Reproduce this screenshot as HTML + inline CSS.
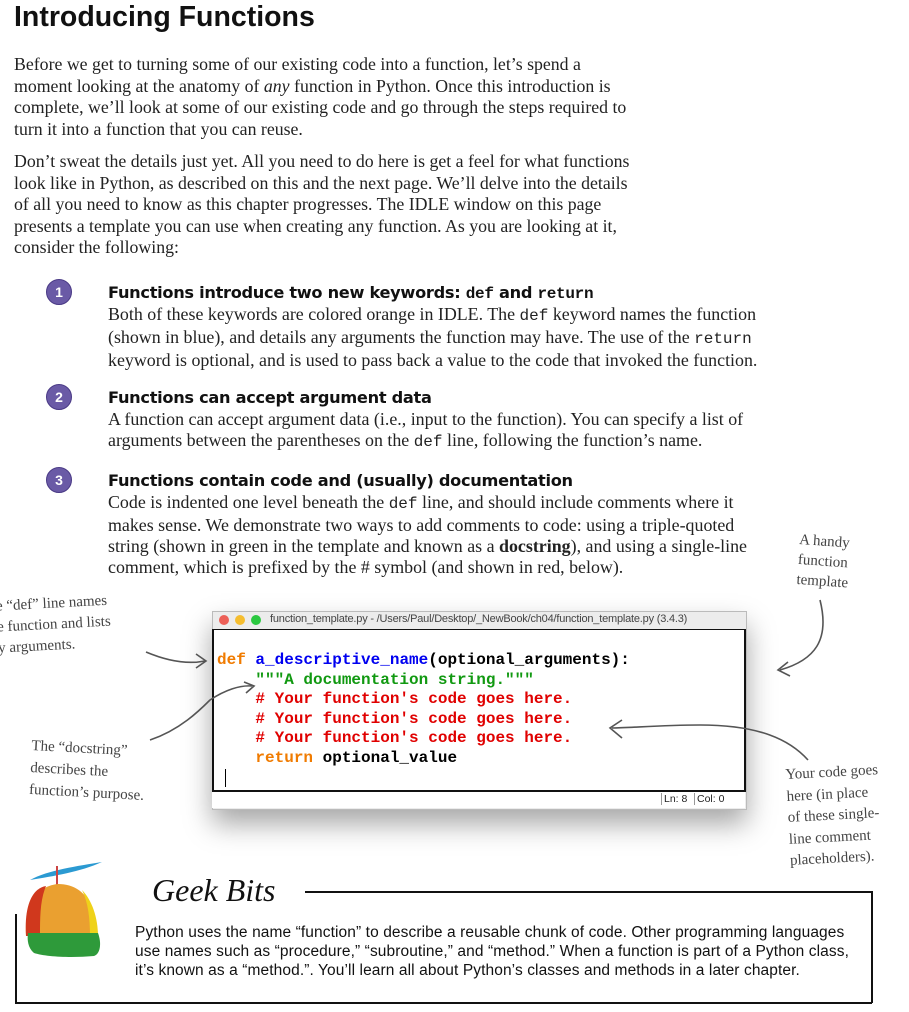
<!DOCTYPE html>
<html><head><meta charset="utf-8"><style>
body{margin:0;width:909px;height:1012px;background:#fff;position:relative;overflow:hidden;font-family:"Liberation Serif",serif;color:#222}
.a{position:absolute}
h1{position:absolute;left:14px;top:1px;margin:0;font:bold 28.5px "Liberation Sans",sans-serif;color:#111}
.p{position:absolute;left:14px;font-size:17.8px;line-height:21.5px;white-space:nowrap}
.tt{font-family:"Liberation Mono",monospace;font-size:16px}
.num{position:absolute;left:46px;width:24px;height:24px;border-radius:50%;background:#6a5aa6;border:1px solid #4a3a86;color:#fff;font:bold 14px "Liberation Sans",sans-serif;text-align:center;line-height:24px}
.hd{position:absolute;left:108px;font:bold 16.2px "DejaVu Sans",sans-serif;color:#111;letter-spacing:-0.3px}
.bd{position:absolute;left:108px;font-size:17.9px;line-height:21px;white-space:nowrap}
.hand{position:absolute;font:15px "Liberation Serif",serif;color:#444;line-height:21px;transform:rotate(-3deg);transform-origin:left top}
.code{position:absolute;left:217px;top:651px;font:bold 16px/19.6px "Liberation Mono",monospace;white-space:pre;color:#000}
.gb{position:absolute;left:135px;top:923px;font:15.5px/19px "Liberation Sans",sans-serif;color:#111;letter-spacing:0.1px}
</style></head><body>
<h1>Introducing Functions</h1>
<div class="p" style="top:54px">Before we get to turning some of our existing code into a function, let’s spend a<br>moment looking at the anatomy of <i>any</i> function in Python. Once this introduction is<br>complete, we’ll look at some of our existing code and go through the steps required to<br>turn it into a function that you can reuse.</div>
<div class="p" style="top:151px">Don’t sweat the details just yet. All you need to do here is get a feel for what functions<br>look like in Python, as described on this and the next page. We’ll delve into the details<br>of all you need to know as this chapter progresses. The IDLE window on this page<br>presents a template you can use when creating any function. As you are looking at it,<br>consider the following:</div>

<div class="num" style="top:279px">1</div>
<div class="hd" style="top:283px">Functions introduce two new keywords: <span class="tt" style="font-weight:bold">def</span> and <span class="tt" style="font-weight:bold">return</span></div>
<div class="bd" style="top:304px">Both of these keywords are colored orange in IDLE. The <span class="tt">def</span> keyword names the function<br>(shown in blue), and details any arguments the function may have. The use of the <span class="tt">return</span><br>keyword is optional, and is used to pass back a value to the code that invoked the function.</div>

<div class="num" style="top:384px">2</div>
<div class="hd" style="top:388px">Functions can accept argument data</div>
<div class="bd" style="top:409px">A function can accept argument data (i.e., input to the function). You can specify a list of<br>arguments between the parentheses on the <span class="tt">def</span> line, following the function’s name.</div>

<div class="num" style="top:467px">3</div>
<div class="hd" style="top:471px">Functions contain code and (usually) documentation</div>
<div class="bd" style="top:492px">Code is indented one level beneath the <span class="tt">def</span> line, and should include comments where it<br>makes sense. We demonstrate two ways to add comments to code: using a triple-quoted<br>string (shown in green in the template and known as a <b>docstring</b>), and using a single-line<br>comment, which is prefixed by the # symbol (and shown in red, below).</div>

<div class="hand" style="left:800px;top:530px;line-height:20px;transform:rotate(4deg)">A handy<br>function<br>template</div>
<div class="hand" style="left:-12px;top:597px;line-height:21px">he “def” line names<br>he function and lists<br>ny arguments.</div>
<div class="hand" style="left:32px;top:735px;line-height:22px;transform:rotate(3deg)">The “docstring”<br>describes the<br>function’s purpose.</div>
<div class="hand" style="left:785px;top:765px;line-height:21.5px">Your code goes<br>here (in place<br>of these single-<br>line comment<br>placeholders).</div>

<!-- window -->
<div class="a" style="left:212px;top:611px;width:533px;height:197px;background:#ececec;border:1px solid #bbb;box-shadow:0 14px 26px rgba(0,0,0,.35)"></div>
<div class="a" style="left:219px;top:615px;width:10px;height:10px;border-radius:50%;background:#ec5f57"></div>
<div class="a" style="left:235px;top:615px;width:10px;height:10px;border-radius:50%;background:#f5bd2f"></div>
<div class="a" style="left:251px;top:615px;width:10px;height:10px;border-radius:50%;background:#2bc840"></div>
<div class="a" style="left:270px;top:613px;font:11px 'Liberation Sans',sans-serif;color:#444;letter-spacing:-0.2px">function_template.py - /Users/Paul/Desktop/_NewBook/ch04/function_template.py (3.4.3)</div>
<div class="a" style="left:212px;top:629px;width:530px;height:160px;background:#fff;border:2px solid #111;border-top-width:1px"></div>
<div class="a" style="left:212px;top:792px;width:533px;height:16px;background:#fff"></div>
<div class="a" style="left:661px;top:793px;font:10.5px 'Liberation Sans',sans-serif;color:#222;border-left:1px solid #999;padding:0 2px">Ln: 8</div>
<div class="a" style="left:694px;top:793px;font:10.5px 'Liberation Sans',sans-serif;color:#222;border-left:1px solid #999;padding:0 2px">Col: 0</div>
<div class="a" style="left:225px;top:769px;width:1px;height:18px;background:#000"></div>
<div class="code"><span style="color:#f07b00">def</span> <span style="color:#0000f0">a_descriptive_name</span>(optional_arguments):
    <span style="color:#119911">"""A documentation string."""</span>
    <span style="color:#e00000"># Your function's code goes here.</span>
    <span style="color:#e00000"># Your function's code goes here.</span>
    <span style="color:#e00000"># Your function's code goes here.</span>
    <span style="color:#f07b00">return</span> optional_value</div>

<svg class="a" style="left:0;top:0" width="909" height="1012" fill="none" stroke="#555" stroke-width="1.6">
<path d="M146 652 C165 660,185 665,205 661"/><path d="M196 654 L206 661 L196 668"/>
<path d="M820 600 C830 640,815 660,780 670"/><path d="M788 662 L778 670 L790 676"/>
<path d="M150 740 C180 730,200 710,210 700 C225 690,240 685,252 686"/><path d="M244 682 L254 686 L246 693"/>
<path d="M808 760 C790 740,760 725,700 725 C660 725,630 728,612 728"/><path d="M622 720 L610 728 L622 738"/>
</svg>

<!-- geek bits -->
<div class="a" style="left:15px;top:914px;width:855px;height:88px;border-left:2px solid #111;border-bottom:2px solid #111"></div>
<div class="a" style="left:305px;top:891px;width:566px;height:110px;border-top:2px solid #111;border-right:2px solid #111"></div>
<div class="a" style="left:152px;top:872px;font:italic 32px 'Liberation Serif',serif;color:#111">Geek Bits</div>
<svg class="a" style="left:16px;top:858px" width="100" height="100">
<path d="M14 22 C32 12,62 8,86 4 C64 14,38 18,14 22Z" fill="#2b9ad2"/>
<rect x="40" y="8" width="2" height="22" fill="#c44"/>
<path d="M10 78 C8 44,22 28,42 26 C66 26,80 44,82 78Z" fill="#eaa030"/>
<path d="M10 78 C8 44,18 30,30 28 C24 42,24 60,24 78Z" fill="#d0381d"/>
<path d="M66 32 C76 42,82 60,82 78 L74 78 C74 60,72 44,66 32Z" fill="#efd21a"/>
<path d="M12 75 L82 75 C86 86,84 96,78 98 C56 100,30 99,18 95 C12 90,11 82,12 75Z" fill="#2e9a3a"/>
</svg>
<div class="gb">Python uses the name “function” to describe a reusable chunk of code. Other programming languages<br>use names such as “procedure,” “subroutine,” and “method.” When a function is part of a Python class,<br>it’s known as a “method.”. You’ll learn all about Python’s classes and methods in a later chapter.</div>
</body></html>
